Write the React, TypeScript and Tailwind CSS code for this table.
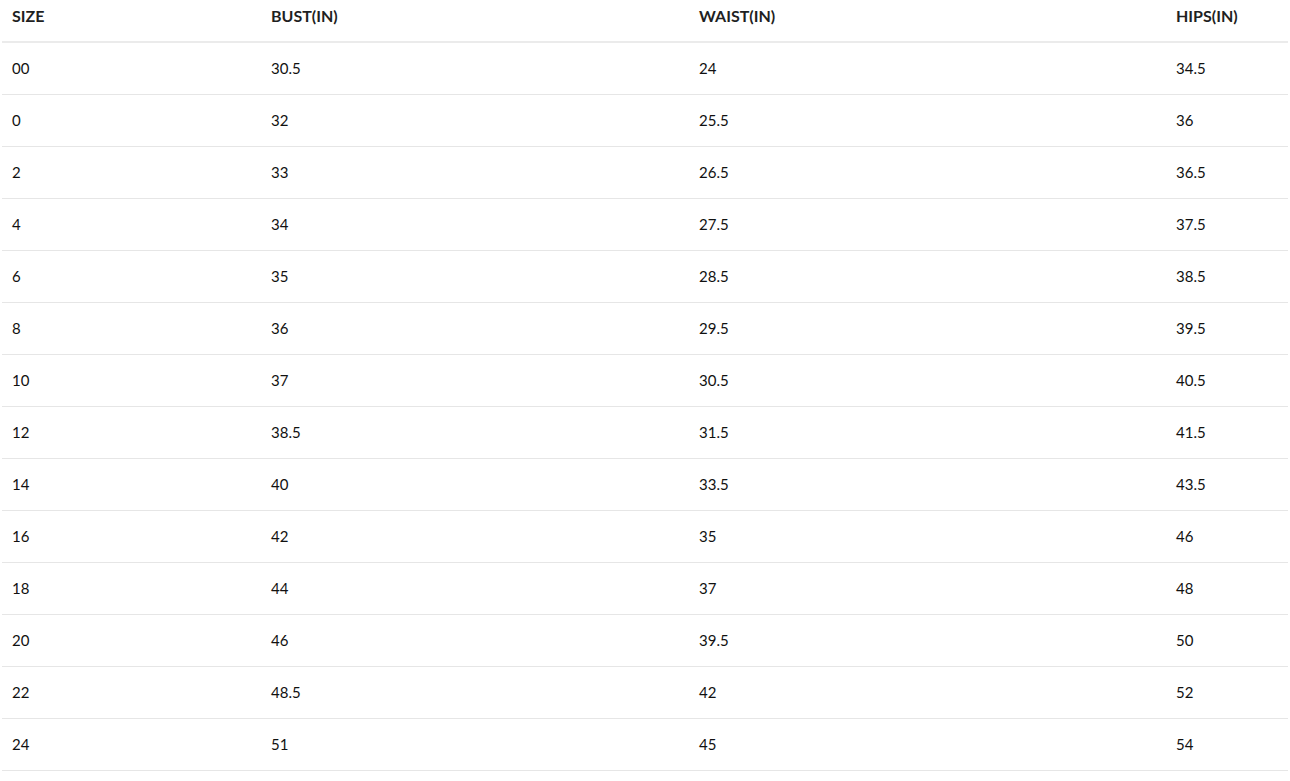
import React from "react";

const rows: [string, string, string, string][] = [
  ["00", "30.5", "24", "34.5"],
  ["0", "32", "25.5", "36"],
  ["2", "33", "26.5", "36.5"],
  ["4", "34", "27.5", "37.5"],
  ["6", "35", "28.5", "38.5"],
  ["8", "36", "29.5", "39.5"],
  ["10", "37", "30.5", "40.5"],
  ["12", "38.5", "31.5", "41.5"],
  ["14", "40", "33.5", "43.5"],
  ["16", "42", "35", "46"],
  ["18", "44", "37", "48"],
  ["20", "46", "39.5", "50"],
  ["22", "48.5", "42", "52"],
  ["24", "51", "45", "54"],
];

export default function App() {
  return (
    <div className="w-[1290px] h-[781px] bg-white px-[2px] font-['Lato','Liberation_Sans',sans-serif] leading-[20px]">
      <table className="w-[1286px] table-fixed border-collapse">
        <colgroup>
          <col className="w-[259px]" />
          <col className="w-[428px]" />
          <col className="w-[477px]" />
          <col className="w-[122px]" />
        </colgroup>
        <thead>
          <tr className="border-b-2 border-[#ebebeb]">
            {["SIZE", "BUST(IN)", "WAIST(IN)", "HIPS(IN)"].map((h) => (
              <th
                key={h}
                className="h-[42px] pt-[6px] pb-0 px-[10px] text-left align-top text-[16px] font-bold text-[#1f1f22]"
              >
                {h}
              </th>
            ))}
          </tr>
        </thead>
        <tbody>
          {rows.map((r) => (
            <tr key={r[0]} className="border-b border-[#e6e6e6]">
              {r.map((c, i) => (
                <td key={i} className="h-[52px] px-[10px] py-0 align-middle text-[15px] text-[#111111]">
                  {c}
                </td>
              ))}
            </tr>
          ))}
        </tbody>
      </table>
    </div>
  );
}
